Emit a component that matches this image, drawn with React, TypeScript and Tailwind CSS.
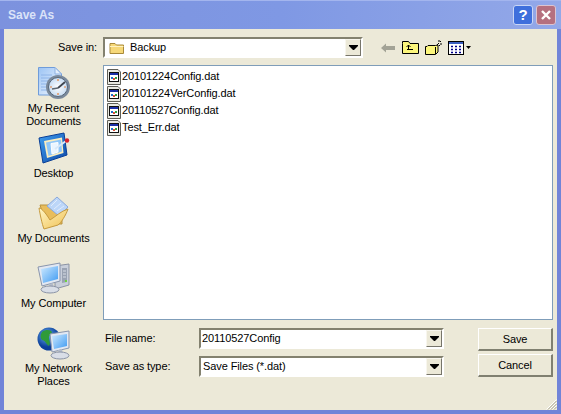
import React from "react";

function Arrow() {
  return (
    <div className="w-[16px] h-[17px] bg-[#ECE9D8] border border-t-[#f8f6ee] border-l-[#f8f6ee] border-r-[#77756a] border-b-[#77756a] flex items-center justify-center">
      <svg width="9" height="5" viewBox="0 0 9 5"><path d="M0 0H9V1L5 5H4L0 1Z" fill="#000" /></svg>
    </div>
  );
}

function Combo({ children, w }: { children: React.ReactNode; w: string }) {
  return (
    <div className={`${w} h-[21px] bg-white border-2 border-t-[#83816f] border-l-[#83816f] border-r-white border-b-white flex items-center justify-between shrink-0`}>
      <div className="flex items-center min-w-0">{children}</div>
      <Arrow />
    </div>
  );
}

function DatIcon() {
  return (
    <svg width="16" height="16" viewBox="0 0 16 16" className="shrink-0">
      <path d="M1.500 .5H12L14.500 3V15.500H1.500Z" fill="#e9e9e2" stroke="#5f5f58" />
      <rect x="3.500" y="3.500" width="9" height="9" fill="#fff" stroke="#111" />
      <rect x="4" y="4" width="8" height="2" fill="#1b2fa8" />
      <rect x="5" y="8" width="2" height="2" fill="#1f6fd0" />
      <rect x="7" y="9" width="2" height="2" fill="#d8503a" />
      <rect x="9" y="8" width="2" height="2" fill="#30a040" />
    </svg>
  );
}

function RecentIcon() {
  return (
    <svg width="34" height="34" viewBox="0 0 34 34">
      <defs>
        <linearGradient id="pg" x1="0" y1="0" x2="1" y2="1"><stop offset="0" stopColor="#9cc4f4" /><stop offset="1" stopColor="#f2f7ff" /></linearGradient>
        <radialGradient id="cg"><stop offset="0" stopColor="#ffffff" /><stop offset="1" stopColor="#c7dcf2" /></radialGradient>
      </defs>
      <path d="M1.500 1.500H18L24.500 8V29H1.500Z" fill="url(#pg)" stroke="#6f9cda" />
      <path d="M18 1.500V8H24.500Z" fill="#e3eefc" stroke="#8fb2e2" />
      <path d="M4 9H15M4 12H14M4 15H12M4 18H10M4 21H9M4 24H10" stroke="#8eb4e8" />
      <circle cx="21" cy="21" r="12" fill="#7b8a9c" />
      <circle cx="21" cy="21" r="9.500" fill="url(#cg)" stroke="#566679" />
      <path d="M21 22L28 16" stroke="#3f4650" strokeWidth="1.800" />
      <path d="M21 22L15 23" stroke="#5d6670" strokeWidth="1.300" />
      <path d="M21 13V15M21 27V29M13 21H15M27 21H29" stroke="#e8823a" strokeWidth="1.200" />
    </svg>
  );
}

function DesktopIcon() {
  return (
    <svg width="32" height="32" viewBox="0 0 32 32">
      <defs>
        <linearGradient id="dg" x1="0" y1="0" x2="1" y2="1"><stop offset="0" stopColor="#3f9ff0" /><stop offset="1" stopColor="#0c48a8" /></linearGradient>
      </defs>
      <path d="M1 6L26 1L29 23L5 31Z" fill="url(#dg)" stroke="#0a3f96" />
      <path d="M6 9L24 5.500L25.500 21L9 26Z" fill="#fbeec0" />
      <path d="M8 10.500L23 7.500L24 19.500L10.500 24Z" fill="#8fc6f8" />
      <path d="M13 11.500L20 10.500V20L14 22Z" fill="#eaf5ff" stroke="#fff" />
      <path d="M17 17L28 9" stroke="#d8e8f8" strokeWidth="2" />
      <circle cx="29" cy="8.500" r="2.200" fill="#d8222a" />
    </svg>
  );
}

function DocsIcon() {
  return (
    <svg width="32" height="34" viewBox="0 0 32 34">
      <defs>
        <linearGradient id="fg" x1="0" y1="0" x2="1" y2="1"><stop offset="0" stopColor="#fff6c8" /><stop offset="1" stopColor="#f0c050" /></linearGradient>
      </defs>
      <path d="M2 9H11L13 12H24V28H8Z" fill="#e8bd5c" stroke="#b9933f" />
      <path d="M9 10L19 1L30 11L21 20Z" fill="#bcd6f8" stroke="#8aa9dc" />
      <path d="M13 10L19 4M16 13L23 7M19 15L26 10" stroke="#e1ecfc" />
      <path d="M1 12C4 12 9 19 12 24C17 21 23 15 30 13C28 19 23 27 20 29L6 33C4 28 2 18 1 12Z" fill="url(#fg)" stroke="#c69a3e" />
    </svg>
  );
}

function ComputerIcon() {
  return (
    <svg width="34" height="32" viewBox="0 0 34 32">
      <defs>
        <linearGradient id="sg" x1="0" y1="0" x2="1" y2="1"><stop offset="0" stopColor="#cfeaff" /><stop offset="1" stopColor="#3f9bf2" /></linearGradient>
      </defs>
      <path d="M18 4L32 2V23L18 27Z" fill="#c9cfda" stroke="#8b93a3" />
      <path d="M25 6H30V20L25 21Z" fill="#9aa3b3" />
      <path d="M26 9H29M26 12H29M26 15H29" stroke="#d8dde6" />
      <rect x="28" y="18" width="2" height="2" fill="#6fd040" />
      <path d="M1 5L23 1V19L5 24Z" fill="#e2e8f2" stroke="#8a96ad" />
      <path d="M4 7L21 4V17L6 21Z" fill="url(#sg)" />
      <path d="M12 22L16 21L17 26L13 27Z" fill="#b4bccb" />
      <ellipse cx="13" cy="27.500" rx="9" ry="3.500" fill="#d9dee7" stroke="#8a93a6" />
    </svg>
  );
}

function NetworkIcon() {
  return (
    <svg width="34" height="33" viewBox="0 0 34 33">
      <defs>
        <radialGradient id="gl" cx="0.4" cy="0.35"><stop offset="0" stopColor="#6ab0f0" /><stop offset="1" stopColor="#0b3f9a" /></radialGradient>
        <linearGradient id="sn" x1="0" y1="0" x2="1" y2="1"><stop offset="0" stopColor="#cfeaff" /><stop offset="1" stopColor="#3f9bf2" /></linearGradient>
      </defs>
      <circle cx="12" cy="12" r="11.500" fill="url(#gl)" />
      <path d="M5 5C9 2 14 3 15 5C14 8 12 8 12 11C12 15 14 15 12 19C9 17 8 13 5 13C3 11 3 8 5 5Z" fill="#2f9b3a" />
      <path d="M13 7L32 4V21L15 25Z" fill="#e2e8f2" stroke="#8a96ad" />
      <path d="M15 9L30 7V19L17 22Z" fill="url(#sn)" />
      <path d="M21 23L25 22L26 27L22 28Z" fill="#b4bccb" />
      <ellipse cx="23" cy="28.500" rx="9" ry="3.500" fill="#d9dee7" stroke="#8a93a6" />
    </svg>
  );
}

function Place({ icon, label }: { icon: React.ReactNode; label: React.ReactNode }) {
  return (
    <div className="h-[65px] w-[90px] flex flex-col items-center text-center leading-[13px] shrink-0">
      <div className="h-[34px] flex items-center justify-center">{icon}</div>
      <div className="mt-[2px]">{label}</div>
    </div>
  );
}

function FileRow({ name }: { name: string }) {
  return (
    <div className="flex items-center h-[17px]">
      <DatIcon />
      <span>{name}</span>
    </div>
  );
}

function Btn({ label }: { label: string }) {
  return (
    <div className="w-[75px] h-[23px] flex items-center justify-center bg-[#ECE9D8] border border-t-white border-l-white border-r-2 border-b-2 border-r-[#808070] border-b-[#808070]">
      {label}
    </div>
  );
}

export default function App() {
  return (
    <div
      className="w-[561px] h-[414px] overflow-hidden flex flex-col bg-[#7184d8] text-[11px] tracking-[-0.1px] text-black"
      style={{ fontFamily: '"Liberation Sans", Arial, sans-serif' }}
    >
      <div className="h-[29px] shrink-0 flex items-center justify-between pl-[8px] pr-[5px] bg-gradient-to-r from-[#7c92de] via-[#7f98e4] to-[#93a8e8] border-t border-[#a3b5ee]">
        <span className="text-[12px] font-bold text-[#dbe3f8] tracking-normal">Save As</span>
        <div className="flex gap-[3px]">
          <div className="w-[20px] h-[20px] rounded-[3px] bg-[#3f6fdc] border border-[#c9d6f6] flex items-center justify-center text-white font-bold text-[15px]">?</div>
          <div className="w-[20px] h-[20px] rounded-[3px] bg-[#b5707f] border border-[#dcc4d0] flex items-center justify-center">
            <svg width="12" height="12" viewBox="0 0 12 12"><path d="M2 2L10 10M10 2L2 10" stroke="#fff" strokeWidth="2.400" /></svg>
          </div>
        </div>
      </div>

      <div className="flex-1 mx-[4px] mb-[4px] bg-[#ECE9D8] flex min-h-0 relative">
        <div className="w-[99px] shrink-0 flex flex-col items-center pt-[37px]">
          <Place icon={<RecentIcon />} label={<>My Recent<br />Documents</>} />
          <Place icon={<DesktopIcon />} label="Desktop" />
          <Place icon={<DocsIcon />} label="My Documents" />
          <Place icon={<ComputerIcon />} label="My Computer" />
          <Place icon={<NetworkIcon />} label={<>My Network<br />Places</>} />
        </div>

        <div className="flex-1 min-w-0 pr-[4px] pt-[8px] flex flex-col">
          <div className="h-[21px] flex items-center -ml-[45px] shrink-0">
            <span className="w-[45px] shrink-0 whitespace-nowrap">Save in:</span>
            <Combo w="w-[260px]">
              <svg width="16" height="14" viewBox="0 0 16 14" className="ml-[4px] mr-[5px]">
                <path d="M1 2.500H6L7.500 4H14.500V12.500H1Z" fill="#f6d878" stroke="#a98a3a" />
                <path d="M1 5.500H14.500" stroke="#fff2c0" />
              </svg>
              <span>Backup</span>
            </Combo>
            <div className="flex items-center ml-[18px]">
              <svg width="14" height="10" viewBox="0 0 14 10" className="mr-[7px]"><path d="M0 5L5 .5V3H14V7H5V9.500Z" fill="#a3a396" /></svg>
              <svg width="17" height="13" viewBox="0 0 17 13" className="mr-[6px]">
                <path d="M.5 2.500V.5H6.500L8 2.500H16.500V12.500H.5Z" fill="#fcf67c" stroke="#000" />
                <path d="M5 8.500H11M6.500 8.500V4M4.500 6L6.500 4L8.500 6" stroke="#000" fill="none" />
              </svg>
              <svg width="17" height="15" viewBox="0 0 17 15" className="mr-[6px]">
                <path d="M.5 6.500H2L3 5.500H10.500L13 5V12L10.500 14.500H.5Z" fill="#fcf67c" stroke="#000" />
                <path d="M10.500 7V14" stroke="#000" />
                <path d="M12 5L14 3M14 0V2M15 4H17M15 2L16 1M14 5L15 6" stroke="#000" />
              </svg>
              <svg width="16" height="14" viewBox="0 0 16 14">
                <rect x=".5" y=".5" width="15" height="13" fill="#fff" stroke="#000" />
                <rect x="1" y="1" width="14" height="2" fill="#3b5fc0" />
                <path d="M3 5.500H5M7 5.500H9M11 5.500H13M3 8.500H5M7 8.500H9M11 8.500H13M3 11.500H5M7 11.500H9M11 11.500H13" stroke="#00008a" strokeWidth="1.500" />
              </svg>
              <svg width="5" height="3" viewBox="0 0 5 3" className="ml-[2px]"><path d="M0 0H5L2.500 3Z" fill="#000" /></svg>
            </div>
          </div>

          <div className="h-[255px] mt-[7px] bg-white border border-[#7f9db9] pt-[2px] pl-[2px] shrink-0">
            <FileRow name="20101224Config.dat" />
            <FileRow name="20101224VerConfig.dat" />
            <FileRow name="20110527Config.dat" />
            <FileRow name="Test_Err.dat" />
          </div>

          <div className="flex mt-[8px] items-start">
            <div className="flex flex-col gap-[7px]">
              <div className="flex items-center">
                <span className="w-[96px] shrink-0 pl-[2px]">File name:</span>
                <Combo w="w-[245px]"><span className="pl-[1px]">20110527Config</span></Combo>
              </div>
              <div className="flex items-center">
                <span className="w-[96px] shrink-0 pl-[2px]">Save as type:</span>
                <Combo w="w-[245px]"><span className="pl-[2px]">Save Files (*.dat)</span></Combo>
              </div>
            </div>
            <div className="flex flex-col gap-[3px] ml-[34px]">
              <Btn label="Save" />
              <Btn label="Cancel" />
            </div>
          </div>
        </div>

        <svg width="12" height="12" viewBox="0 0 12 12" className="absolute right-0 bottom-0">
          <path d="M11.500 3L3 11.500M11.500 6L6 11.500M11.500 9L9 11.500" stroke="#a8a690" />
          <path d="M11.500 1.500L1.500 11.500M11.500 4.500L4.500 11.500M11.500 7.500L7.500 11.500" stroke="#fff" />
        </svg>
      </div>
    </div>
  );
}
